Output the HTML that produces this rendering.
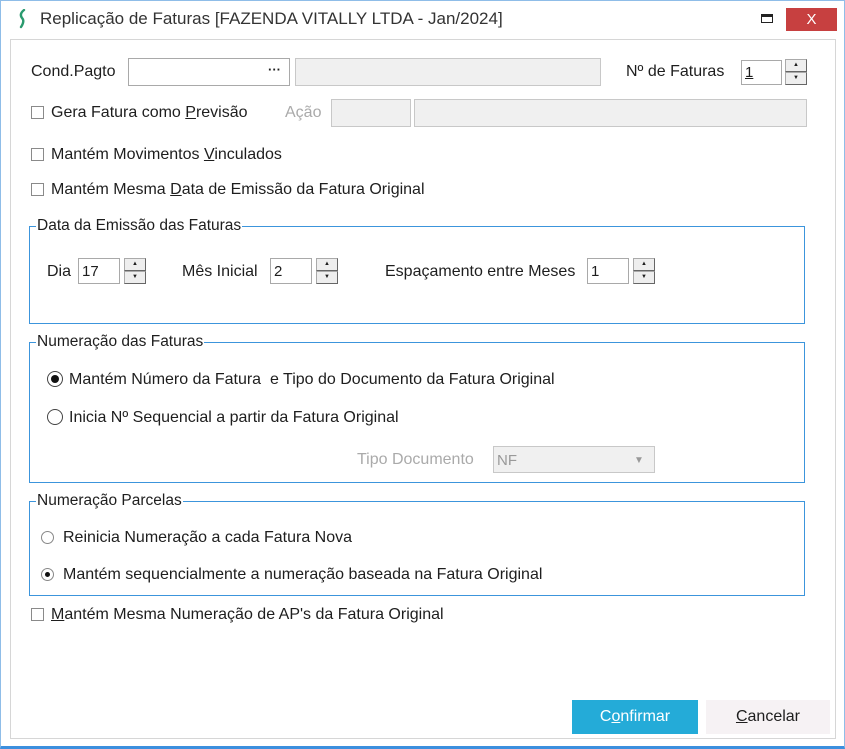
<!DOCTYPE html>
<html><head><meta charset="utf-8"><style>
*{box-sizing:border-box;margin:0;padding:0}
body{width:845px;height:749px;background:#fff;font-family:"Liberation Sans",sans-serif;font-size:16px;color:#1e1e1e;position:relative;overflow:hidden}
.a{position:absolute;white-space:nowrap;line-height:18px}
.win{position:absolute;left:0;top:0;width:845px;height:749px;border:1px solid #8fbde8;border-bottom:3px solid #3c8fde}
.panel{position:absolute;left:10px;top:39px;width:826px;height:700px;border:1px solid #d6d6d6}
.in{position:absolute;background:#fff;border:1px solid #a9a9a9;height:24px;font-size:15px}
.dis{background:#f0f0f0;border-color:#c8c8c8}
.cb{position:absolute;width:13px;height:13px;border:1px solid #8a8a8a;background:#fff}
.grp{position:absolute;border:1px solid #3c95dc}
.gl{position:absolute;background:#fff;padding:0 1px;top:-10px;left:6px;font-size:15.5px;line-height:18px}
.sp{position:absolute;width:22px;height:26px}
.sp div{height:13px;background:#eee;border:1px solid #aaa;border-right-color:#666;border-bottom-color:#666;font-size:6px;text-align:center;line-height:10px}
.rad{position:absolute;width:16px;height:16px;border:1px solid #444;border-radius:50%;background:#fff}
.rad.on::after{content:"";position:absolute;left:3px;top:3px;width:8px;height:8px;border-radius:50%;background:#111}
.rs{position:absolute;width:13px;height:13px;border:1px solid #888;border-radius:50%;background:#fff}
.rs.on::after{content:"";position:absolute;left:3px;top:3px;width:5px;height:5px;border-radius:50%;background:#111}
u{text-decoration:underline}
</style></head><body>
<div class="win"></div>
<svg class="a" style="left:17px;top:9px" width="12" height="20" viewBox="0 0 12 20"><path d="M7 1 Q2 5 5 9 Q8 12 4 18" stroke="#2a9a6e" stroke-width="2.4" fill="none" stroke-linecap="round"/></svg>
<div class="a" style="left:40px;top:10px;font-size:17px;color:#333">Replicação de Faturas [FAZENDA VITALLY LTDA - Jan/2024]</div>
<div class="a" style="left:761px;top:14px;width:12px;height:9px;border:1px solid #222;border-top-width:3px"></div>
<div class="a" style="left:786px;top:8px;width:51px;height:23px;background:#c74040;color:#fff;text-align:center;font-size:15px;line-height:23px">X</div>
<div class="panel"></div>

<div class="a" style="left:31px;top:63px">Cond.Pagto</div>
<div class="in" style="left:128px;top:58px;width:162px;height:28px"></div>
<div class="a" style="left:268px;top:61px;font-weight:bold;font-size:13px">···</div>
<div class="in dis" style="left:295px;top:58px;width:306px;height:28px"></div>
<div class="a" style="left:626px;top:63px">Nº de Faturas</div>
<div class="in" style="left:741px;top:60px;width:41px;height:25px;padding:3px 3px"><u>1</u></div>
<div class="sp" style="left:785px;top:59px"><div>▲</div><div>▼</div></div>

<div class="cb" style="left:31px;top:106px"></div>
<div class="a" style="left:51px;top:104px">Gera Fatura como <u>P</u>revisão</div>
<div class="a" style="left:285px;top:104px;color:#aaa">Ação</div>
<div class="in dis" style="left:331px;top:99px;width:80px;height:28px"></div>
<div class="in dis" style="left:414px;top:99px;width:393px;height:28px"></div>

<div class="cb" style="left:31px;top:148px"></div>
<div class="a" style="left:51px;top:146px">Mantém Movimentos <u>V</u>inculados</div>
<div class="cb" style="left:31px;top:183px"></div>
<div class="a" style="left:51px;top:181px">Mantém Mesma <u>D</u>ata de Emissão da Fatura Original</div>

<div class="grp" style="left:29px;top:226px;width:776px;height:98px"><div class="gl">Data da Emissão das Faturas</div></div>
<div class="a" style="left:47px;top:263px">Dia</div>
<div class="in" style="left:78px;top:258px;width:42px;height:26px;padding:4px 3px">17</div>
<div class="sp" style="left:124px;top:258px"><div>▲</div><div>▼</div></div>
<div class="a" style="left:182px;top:263px">Mês Inicial</div>
<div class="in" style="left:270px;top:258px;width:42px;height:26px;padding:4px 3px">2</div>
<div class="sp" style="left:316px;top:258px"><div>▲</div><div>▼</div></div>
<div class="a" style="left:385px;top:263px">Espaçamento entre Meses</div>
<div class="in" style="left:587px;top:258px;width:42px;height:26px;padding:4px 3px">1</div>
<div class="sp" style="left:633px;top:258px"><div>▲</div><div>▼</div></div>

<div class="grp" style="left:29px;top:342px;width:776px;height:141px"><div class="gl">Numeração das Faturas</div></div>
<div class="rad on" style="left:47px;top:371px"></div>
<div class="a" style="left:69px;top:371px">Mantém Número da Fatura&nbsp; e Tipo do Documento da Fatura Original</div>
<div class="rad" style="left:47px;top:409px"></div>
<div class="a" style="left:69px;top:409px">Inicia Nº Sequencial a partir da Fatura Original</div>
<div class="a" style="left:357px;top:451px;color:#aaa">Tipo Documento</div>
<div class="in dis" style="left:493px;top:446px;width:162px;height:27px;padding:5px 3px;color:#999">NF</div>
<div class="a" style="left:634px;top:452px;color:#999;font-size:10px">▼</div>

<div class="grp" style="left:29px;top:501px;width:776px;height:95px"><div class="gl">Numeração Parcelas</div></div>
<div class="rs" style="left:41px;top:531px"></div>
<div class="a" style="left:63px;top:529px">Reinicia Numeração a cada Fatura Nova</div>
<div class="rs on" style="left:41px;top:568px"></div>
<div class="a" style="left:63px;top:566px">Mantém sequencialmente a numeração baseada na Fatura Original</div>

<div class="cb" style="left:31px;top:608px"></div>
<div class="a" style="left:51px;top:606px"><u>M</u>antém Mesma Numeração de AP's da Fatura Original</div>

<div class="a" style="left:572px;top:700px;width:126px;height:34px;background:#24abd8;color:#fff;text-align:center;line-height:34px">C<u>o</u>nfirmar</div>
<div class="a" style="left:706px;top:700px;width:124px;height:34px;background:#f6f2f4;text-align:center;line-height:34px"><u>C</u>ancelar</div>
</body></html>
